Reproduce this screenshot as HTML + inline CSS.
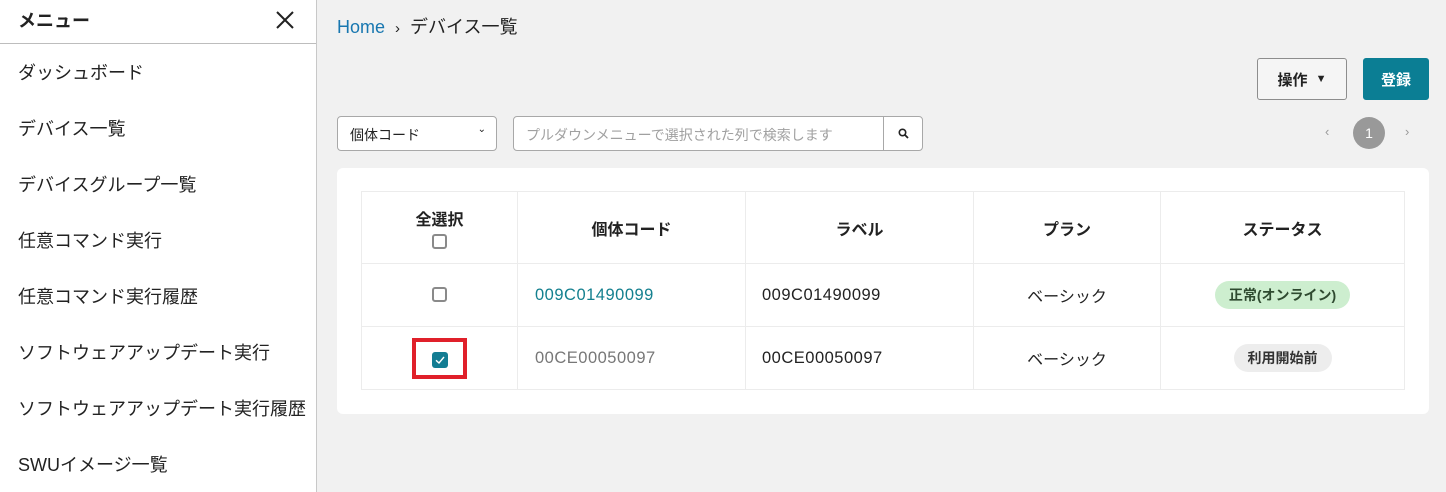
<!DOCTYPE html>
<html><head><meta charset="utf-8"><style>
*{box-sizing:border-box;margin:0;padding:0}
body{width:1446px;height:492px;overflow:hidden;background:#f1f1f1;font-family:"Liberation Sans","Noto Sans CJK JP",sans-serif;color:#222;position:relative}
.side{position:absolute;left:0;top:0;width:317px;height:492px;background:#fff;border-right:1px solid #c8c8c8}
.sh{height:44px;border-bottom:1px solid #bdbdbd;position:relative}
.sh span{position:absolute;left:18px;top:7px;font-size:18px;font-weight:bold}
.side .it{position:absolute;left:18px;font-size:18px;color:#222}
.abs{position:absolute}
.crumb{left:337px;top:13px;font-size:18px}
.btn{border:1px solid #8d8d8d;border-radius:3px;background:#f5f5f5;font-weight:bold;font-size:15px;display:flex;align-items:center;justify-content:center}
.card{left:337px;top:168px;width:1092px;height:246px;background:#fff;border-radius:6px}
table{position:absolute;left:24px;top:23px;width:1044px;border-collapse:collapse;font-size:16px}
td,th{border:1px solid #ececec;text-align:center}
th{height:72px;font-weight:bold}
td{height:63px}
.num{font-size:16.5px;letter-spacing:0.5px}
.cb{display:inline-block;width:15px;height:15px;border:2px solid #8a8a8a;border-radius:3px;vertical-align:middle}
.pill{display:inline-block;padding:4px 14px;border-radius:14px;font-size:14px;font-weight:bold}
</style></head><body>
<div class="side">
<div class="sh"><span>メニュー</span>
<svg class="abs" style="left:275px;top:10px" width="20" height="20" viewBox="0 0 20 20"><path d="M2 2L18 18M18 2L2 18" stroke="#222" stroke-width="2"/></svg></div>
<div class="it" style="top:59px">ダッシュボード</div>
<div class="it" style="top:115px">デバイス一覧</div>
<div class="it" style="top:171px">デバイスグループ一覧</div>
<div class="it" style="top:227px">任意コマンド実行</div>
<div class="it" style="top:283px">任意コマンド実行履歴</div>
<div class="it" style="top:339px">ソフトウェアアップデート実行</div>
<div class="it" style="top:395px">ソフトウェアアップデート実行履歴</div>
<div class="it" style="top:451px">SWUイメージ一覧</div>
</div>
<div class="abs crumb"><span style="color:#1877b0">Home</span> <span style="font-size:15px;margin:0 5px">›</span> デバイス一覧</div>
<div class="abs btn" style="left:1257px;top:58px;width:90px;height:42px">操作 <span style="font-size:11px;margin-left:8px">▼</span></div>
<div class="abs btn" style="left:1363px;top:58px;width:66px;height:42px;background:#0b7e94;border-color:#0b7e94;color:#fff">登録</div>
<div class="abs" style="left:337px;top:116px;width:160px;height:35px;background:#fff;border:1px solid #a8a8a8;border-radius:4px;font-size:14px;padding:8px 12px">個体コード<span style="position:absolute;right:10px;top:7px;font-size:10px">⌄</span></div>
<div class="abs" style="left:513px;top:116px;width:371px;height:35px;background:#fff;border:1px solid #a8a8a8;border-radius:4px 0 0 4px;font-size:14px;padding:8px 12px;color:#a0a0a0">プルダウンメニューで選択された列で検索します</div>
<div class="abs" style="left:883px;top:116px;width:40px;height:35px;background:#fff;border:1px solid #a8a8a8;border-radius:0 4px 4px 0">
<svg class="abs" style="left:14px;top:11px" width="11" height="11" viewBox="0 0 11 11"><circle cx="4.5" cy="4.5" r="3.2" stroke="#222" stroke-width="1.6" fill="none"/><path d="M7 7L10 10" stroke="#222" stroke-width="1.8"/></svg></div>
<div class="abs" style="left:1325px;top:124px;font-size:13px;color:#999">‹</div>
<div class="abs" style="left:1353px;top:117px;width:32px;height:32px;border-radius:50%;background:#999;color:#fff;font-size:14px;text-align:center;line-height:32px">1</div>
<div class="abs" style="left:1405px;top:124px;font-size:13px;color:#999">›</div>
<div class="abs card">
<table>
<tr><th style="width:156px">全選択<br><span class="cb" style="margin-top:4px"></span></th><th style="width:228px">個体コード</th><th style="width:228px">ラベル</th><th style="width:187px">プラン</th><th>ステータス</th></tr>
<tr><td><span class="cb"></span></td><td class="num" style="text-align:left;padding-left:17px;color:#14808f">009C01490099</td><td class="num" style="text-align:left;padding-left:16px">009C01490099</td><td>ベーシック</td><td><span class="pill" style="background:#cdeecf;color:#2f4a30">正常(オンライン)</span></td></tr>
<tr><td><span style="display:inline-block;border:4px solid #e0202a;width:55px;height:41px;position:relative;vertical-align:middle"><span style="position:absolute;left:16px;top:10px;width:16px;height:16px;background:#137d93;border-radius:3px"><svg width="16" height="16" viewBox="0 0 16 16" style="display:block"><path d="M4 8.3L7 11L12 5" stroke="#fff" stroke-width="1.4" fill="none"/></svg></span></span></td><td class="num" style="text-align:left;padding-left:17px;color:#777">00CE00050097</td><td class="num" style="text-align:left;padding-left:16px">00CE00050097</td><td>ベーシック</td><td><span class="pill" style="background:#ededed;color:#333">利用開始前</span></td></tr>
</table>
</div>
</body></html>
